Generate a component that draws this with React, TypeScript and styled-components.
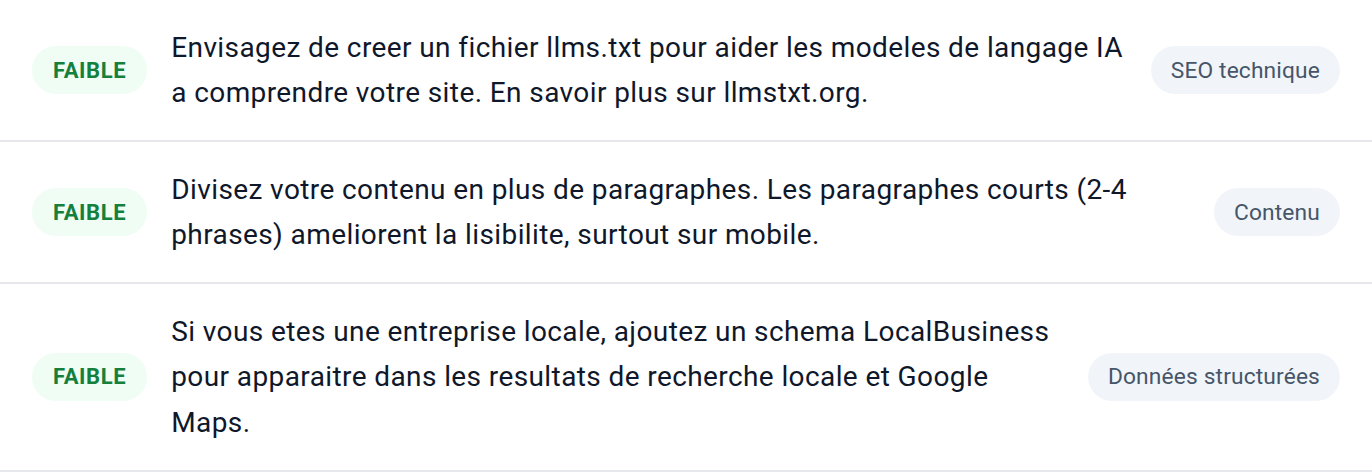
import styled, { createGlobalStyle } from "styled-components";

const GlobalStyle = createGlobalStyle`
  body {
    margin: 0;
    background: #ffffff;
    font-family: Roboto, "Liberation Sans", sans-serif;
  }
`;

const List = styled.div`
  width: 100%;
  display: flex;
  flex-direction: column;
`;

const Row = styled.div`
  display: flex;
  align-items: center;
  gap: 24px;
  padding: 24.5px 32px;
  border-bottom: 2px solid #e5e7eb;
`;

const Severity = styled.span`
  flex-shrink: 0;
  display: flex;
  align-items: center;
  height: 48px;
  padding: 0 21px;
  border-radius: 24px;
  background: #f0fdf4;
  color: #15803d;
  font-size: 22px;
  font-weight: 700;
  letter-spacing: 0.6px;
`;

const Message = styled.p`
  flex: 1;
  margin: 0;
  color: #0f172a;
  font-size: 28px;
  line-height: 1.625;
  letter-spacing: 0.4px;
`;

const Category = styled.span`
  flex-shrink: 0;
  display: flex;
  align-items: center;
  height: 48px;
  padding: 0 20px;
  border-radius: 24px;
  background: #f1f5f9;
  color: #475569;
  font-size: 22.75px;
  letter-spacing: 0.15px;
`;

const items = [
  {
    text: "Envisagez de creer un fichier llms.txt pour aider les modeles de langage IA a comprendre votre site. En savoir plus sur llmstxt.org.",
    category: "SEO technique",
  },
  {
    text: "Divisez votre contenu en plus de paragraphes. Les paragraphes courts (2-4 phrases) ameliorent la lisibilite, surtout sur mobile.",
    category: "Contenu",
  },
  {
    text: "Si vous etes une entreprise locale, ajoutez un schema LocalBusiness pour apparaitre dans les resultats de recherche locale et Google Maps.",
    category: "Données structurées",
  },
];

export default function App() {
  return (
    <>
      <GlobalStyle />
      <List>
        {items.map((item) => (
          <Row key={item.category}>
            <Severity>FAIBLE</Severity>
            <Message>{item.text}</Message>
            <Category>{item.category}</Category>
          </Row>
        ))}
      </List>
    </>
  );
}
